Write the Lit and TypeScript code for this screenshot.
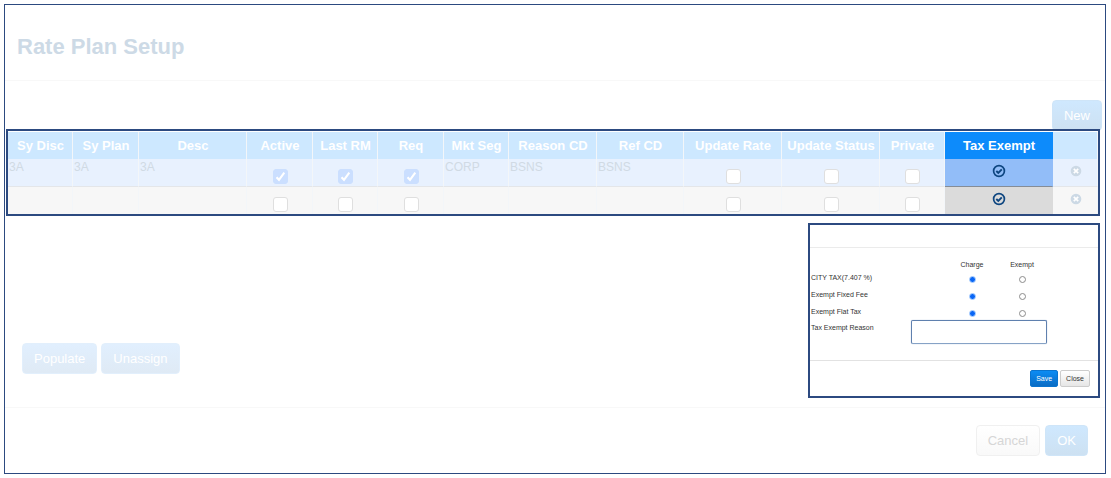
import { LitElement, html, css, nothing } from "lit";
import { customElement } from "lit/decorators.js";
import { classMap } from "lit/directives/class-map.js";

type Kind = "text" | "check" | "exempt" | "remove";

interface Column {
  key: string;
  label: string;
  width: number;
  kind: Kind;
}

const COLUMNS: Column[] = [
  { key: "disc", label: "Sy Disc", width: 65, kind: "text" },
  { key: "plan", label: "Sy Plan", width: 66, kind: "text" },
  { key: "desc", label: "Desc", width: 108, kind: "text" },
  { key: "active", label: "Active", width: 66, kind: "check" },
  { key: "lastRm", label: "Last RM", width: 65, kind: "check" },
  { key: "req", label: "Req", width: 66, kind: "check" },
  { key: "seg", label: "Mkt Seg", width: 65, kind: "text" },
  { key: "reason", label: "Reason CD", width: 88, kind: "text" },
  { key: "ref", label: "Ref CD", width: 87, kind: "text" },
  { key: "rate", label: "Update Rate", width: 98, kind: "check" },
  { key: "status", label: "Update Status", width: 98, kind: "check" },
  { key: "private", label: "Private", width: 65, kind: "check" },
  { key: "exempt", label: "Tax Exempt", width: 108, kind: "exempt" },
  { key: "remove", label: "", width: 45, kind: "remove" },
];

const TOTAL = COLUMNS.reduce((sum, c) => sum + c.width, 0);

const ROWS: Record<string, string | boolean>[] = [
  { disc: "3A", plan: "3A", desc: "3A", active: true, lastRm: true, req: true, seg: "CORP", reason: "BSNS", ref: "BSNS" },
  {},
];

const TAXES = ["CITY TAX(7.407 %)", "Exempt Fixed Fee", "Exempt Flat Tax"];

@customElement("tax-exempt-panel")
export class TaxExemptPanel extends LitElement {
  static styles = css`
    :host {
      display: block;
      box-sizing: border-box;
      border: 2px solid #2c4a80;
      background: #fff;
      color: #333;
      font: 7px/8px "Liberation Sans", Arial, sans-serif;
    }
    .top {
      height: 22px;
      border-bottom: 1px solid #ebebeb;
    }
    .body {
      padding: 13px 51px 16px 1px;
    }
    .line {
      display: grid;
      grid-template-columns: 1fr 50px 50px;
      height: 17px;
      align-items: center;
    }
    .line.head {
      height: 8px;
    }
    .opt {
      display: flex;
      justify-content: center;
      padding-top: 3px;
    }
    .head .opt {
      padding: 0;
    }
    .radio {
      appearance: none;
      box-sizing: border-box;
      width: 7px;
      height: 7px;
      margin: 0;
      border: 1px solid #8c8c8c;
      border-radius: 50%;
      background: #fff;
    }
    .radio:checked {
      border-color: #8dbcfd;
      background: radial-gradient(circle, #0a66f5 0 2px, #5c9ffb 3px);
    }
    .reason {
      display: grid;
      grid-template-columns: 1fr 136px;
    }
    .reason label {
      padding-top: 4px;
    }
    .box {
      box-sizing: border-box;
      width: 100%;
      height: 24px;
      border: 1px solid #5f80ae;
      border-bottom-color: #86a2c6;
      border-radius: 2px;
      background: #fff;
      font: inherit;
      padding: 2px;
      box-shadow: 0 0 1px #86a2c6;
    }
    .bottom {
      display: flex;
      justify-content: flex-end;
      gap: 2px;
      padding: 9px 8px;
      border-top: 1px solid #e2e2e2;
    }
    .btn {
      height: 17px;
      padding: 0 5px;
      border: 1px solid #ccc;
      border-radius: 2px;
      background: linear-gradient(#fff, #e6e6e6);
      color: #333;
      font: inherit;
    }
    .save {
      border-color: #0a74cf;
      background: linear-gradient(#0c8cf4, #0a6cc4);
      color: #fff;
    }
  `;

  render() {
    return html`
      <div class="top"></div>
      <div class="body">
        <div class="line head">
          <span></span><span class="opt">Charge</span><span class="opt">Exempt</span>
        </div>
        ${TAXES.map(
          (tax, i) => html`
            <div class="line" role="radiogroup" aria-labelledby=${`tax-${i}`}>
              <span id=${`tax-${i}`}>${tax}</span>
              <span class="opt">
                <input class="radio" type="radio" name=${`tax-${i}`} aria-label="Charge" checked />
              </span>
              <span class="opt">
                <input class="radio" type="radio" name=${`tax-${i}`} aria-label="Exempt" />
              </span>
            </div>
          `
        )}
        <div class="reason">
          <label for="reason">Tax Exempt Reason</label>
          <input id="reason" class="box" type="text" />
        </div>
      </div>
      <div class="bottom">
        <button class="btn save" type="button">Save</button>
        <button class="btn" type="button">Close</button>
      </div>
    `;
  }
}

@customElement("app-root")
export class AppRoot extends LitElement {
  static styles = css`
    :host {
      display: block;
      padding: 4px 5px 4px 4px;
      background: #fff;
      font: 13px/16px "Liberation Sans", Arial, sans-serif;
    }
    .frame {
      border: 1px solid #2c4a80;
    }
    .title {
      margin: 0;
      padding: 29px 12px 20px;
      border-bottom: 1px solid #f8f8f8;
      color: #cddae6;
      font-size: 22px;
      line-height: 26px;
    }
    .toolbar {
      display: flex;
      justify-content: flex-end;
      padding: 19px 3px 0;
      margin-bottom: -2px;
    }
    .btn {
      height: 31px;
      padding: 0 11px;
      border: 1px solid #cfe5f8;
      border-radius: 4px;
      background: linear-gradient(#cfe8fe, #cde1f2);
      color: #fff;
      font: inherit;
    }
    .faint {
      border-color: #e2effc;
      background: linear-gradient(#e1effe, #dfeaf5);
    }
    .plain {
      border-color: #f0f0f0;
      background: linear-gradient(#fff, #f9f9f9);
      color: #d6d6d6;
    }
    .grid {
      position: relative;
      margin: 0 5px 0 1px;
      padding-top: 1px;
      border: 2px solid #2c4a80;
      background: #fff;
    }
    .table {
      width: 100%;
      table-layout: fixed;
      border-collapse: separate;
      border-spacing: 0;
    }
    .th,
    .td {
      box-sizing: border-box;
      padding: 0 0 0 1px;
      border-right: 1px solid #f3f6f9;
      overflow: hidden;
      white-space: nowrap;
    }
    .th {
      height: 27px;
      background: #cde8ff;
      color: #fff;
      text-align: center;
    }
    .td {
      height: 27px;
      background: #f7f7f7;
      color: #d0dae4;
      font-size: 12px;
      vertical-align: top;
    }
    .first .td {
      height: 28px;
      background: #e8f1fe;
      border-bottom: 1px solid #e4e6e9;
    }
    .td.icon,
    .td.check {
      text-align: center;
    }
    .th.exempt {
      background: #0d8bfb;
      border-color: #0d8bfb;
    }
    .td.exempt {
      background: #dbdbdb;
      border-color: #dbdbdb;
      color: #0e4680;
    }
    .first .td.exempt {
      background: #92bdf8;
      border-right-color: #92bdf8;
      border-bottom-color: #858c96;
    }
    .tick {
      appearance: none;
      box-sizing: border-box;
      display: block;
      width: 15px;
      height: 15px;
      margin: 10px auto 0;
      border: 1px solid #dfdfdf;
      border-radius: 3px;
      background: #fff;
    }
    .tick:checked {
      border-color: #cbdfff;
      background: #cbdfff
        url("data:image/svg+xml,%3Csvg xmlns='http://www.w3.org/2000/svg' viewBox='0 0 13 13'%3E%3Cpath d='M2.5 7.2L5 9.8L10.3 2.6' fill='none' stroke='white' stroke-width='2.1'/%3E%3C/svg%3E")
        center / 13px 13px;
    }
    .mark {
      display: block;
      margin: 0 auto;
      padding: 5px 0 0;
      border: 0;
      background: none;
      color: inherit;
    }
    .mark svg {
      display: block;
    }
    .lower {
      display: flex;
      justify-content: space-between;
      align-items: flex-end;
      padding: 7px 5px 9px 17px;
      border-bottom: 1px solid #f8f8f8;
    }
    .actions {
      display: flex;
      gap: 4px;
      padding-bottom: 24px;
    }
    .panel {
      width: 292px;
    }
    .footer {
      display: flex;
      justify-content: flex-end;
      gap: 5px;
      padding: 17px;
    }
  `;

  private cell(col: Column, row: Record<string, string | boolean>) {
    if (col.kind === "check") {
      return html`<td class="td check">
        <input class="tick" type="checkbox" aria-label=${col.label} ?checked=${row[col.key] === true} />
      </td>`;
    }
    if (col.kind === "exempt") {
      return html`<td class="td icon exempt">
        <button class="mark" type="button" aria-label="Tax Exempt">
          <svg width="14" height="14" viewBox="0 0 14 14" fill="none" stroke="currentColor">
            <circle cx="7" cy="7" r="5.4" stroke-width="1.7" />
            <path d="M4.3 7l2 2 3.5-3.6" stroke-width="1.9" />
          </svg>
        </button>
      </td>`;
    }
    if (col.kind === "remove") {
      return html`<td class="td icon">
        <button class="mark" type="button" aria-label="Remove">
          <svg width="14" height="14" viewBox="0 0 14 14">
            <circle cx="7" cy="7" r="5.3" fill="#ccd9e5" />
            <path d="M4.8 4.8l4.4 4.4M9.2 4.8l-4.4 4.4" stroke="#fff" stroke-width="1.7" />
          </svg>
        </button>
      </td>`;
    }
    return html`<td class="td">${row[col.key] ?? nothing}</td>`;
  }

  render() {
    return html`
      <main class="frame">
        <h1 class="title">Rate Plan Setup</h1>
        <div class="toolbar"><button class="btn" type="button">New</button></div>
        <div class="grid">
          <table class="table">
            <colgroup>
              ${COLUMNS.map((c) => html`<col style="width:${(c.width / TOTAL) * 100}%" />`)}
            </colgroup>
            <thead>
              <tr>
                ${COLUMNS.map(
                  (c) => html`<th class=${classMap({ th: true, exempt: c.kind === "exempt" })}>${c.label}</th>`
                )}
              </tr>
            </thead>
            <tbody>
              ${ROWS.map(
                (row, i) => html`<tr class=${classMap({ first: i === 0 })}>
                  ${COLUMNS.map((c) => this.cell(c, row))}
                </tr>`
              )}
            </tbody>
          </table>
        </div>
        <div class="lower">
          <div class="actions">
            <button class="btn faint" type="button">Populate</button>
            <button class="btn faint" type="button">Unassign</button>
          </div>
          <tax-exempt-panel class="panel"></tax-exempt-panel>
        </div>
        <div class="footer">
          <button class="btn plain" type="button">Cancel</button>
          <button class="btn" type="button">OK</button>
        </div>
      </main>
    `;
  }
}
